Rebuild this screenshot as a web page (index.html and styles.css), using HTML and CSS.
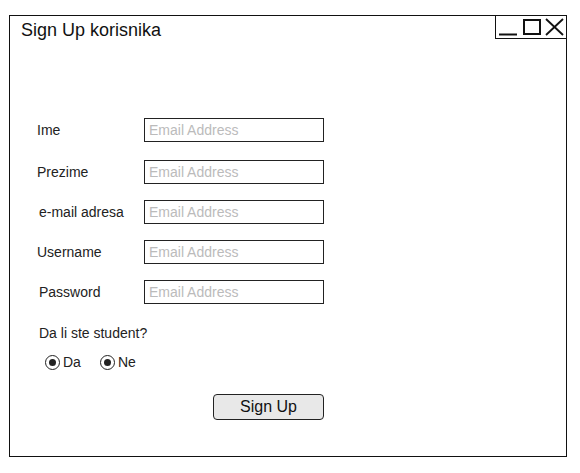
FILE: index.html
```html
<!DOCTYPE html>
<html>
<head>
<meta charset="utf-8">
<link rel="stylesheet" href="styles.css">
</head>
<body>
<div class="window">
  <div class="header">
    <div class="title">Sign Up korisnika</div>
    <div class="controls">
      <svg width="70" height="23" viewBox="0 0 70 23">
        <line x1="4" y1="18.5" x2="22" y2="18.5" stroke="#111" stroke-width="2"/>
        <rect x="29" y="4" width="16" height="14" fill="none" stroke="#111" stroke-width="2"/>
        <line x1="51" y1="3" x2="68" y2="19" stroke="#111" stroke-width="1.8"/>
        <line x1="68" y1="3" x2="51" y2="19" stroke="#111" stroke-width="1.8"/>
      </svg>
    </div>
  </div>
  <div class="form">
    <div class="row first"><span class="label">Ime</span><input class="field" placeholder="Email Address"></div>
    <div class="row"><span class="label">Prezime</span><input class="field" placeholder="Email Address"></div>
    <div class="row"><span class="label shift">e-mail adresa</span><input class="field" placeholder="Email Address"></div>
    <div class="row"><span class="label">Username</span><input class="field" placeholder="Email Address"></div>
    <div class="row"><span class="label shift">Password</span><input class="field" placeholder="Email Address"></div>
    <div class="question">Da li ste student?</div>
    <div class="radios">
      <span class="radio"><span class="dot"></span>Da</span>
      <span class="radio"><span class="dot"></span>Ne</span>
    </div>
    <div class="actions"><button class="btn">Sign Up</button></div>
  </div>
</div>
</body>
</html>
```
FILE: styles.css
```css
* { box-sizing: border-box; }
html, body { margin: 0; padding: 0; background: #fff; }
body {
  font-family: "Liberation Sans", Arial, sans-serif;
  color: #222;
  padding: 15px 0 0 9px;
}
.window {
  width: 558px;
  height: 442px;
  border: 1px solid #111;
}
.header {
  display: flex;
  justify-content: space-between;
  align-items: flex-start;
}
.title {
  font-size: 18px;
  padding: 4px 0 0 11px;
  color: #111;
}
.controls {
  width: 71px;
  height: 23px;
  border-left: 1px solid #111;
  border-bottom: 1px solid #111;
  display: flex;
}
.controls svg { display: block; margin-left: -1px; }
.form {
  padding-left: 27px;
  display: flex;
  flex-direction: column;
}
.row {
  display: flex;
  align-items: center;
  margin-top: 16px;
  height: 24px;
}
.row.first { margin-top: 77px; }
.row:nth-child(2) { margin-top: 18px; }
.label {
  width: 107px;
  font-size: 14px;
  color: #222;
}
.label.shift { padding-left: 2px; }
.field {
  width: 180px;
  height: 24px;
  border: 1px solid #222;
  padding: 0 4px;
  font-family: "Liberation Sans", Arial, sans-serif;
  font-size: 14px;
  outline: none;
}
.field::placeholder { color: #bbb; }
.question {
  font-size: 14px;
  margin: 21px 0 0 2px;
  color: #222;
}
.radios {
  display: flex;
  gap: 19px;
  margin: 13px 0 0 8px;
  font-size: 14px;
}
.radio {
  display: flex;
  align-items: center;
  gap: 3px;
}
.dot {
  width: 15px;
  height: 15px;
  border: 1.5px solid #222;
  border-radius: 50%;
  display: inline-flex;
  align-items: center;
  justify-content: center;
}
.dot::after {
  content: "";
  width: 7px;
  height: 7px;
  border-radius: 50%;
  background: #222;
}
.actions {
  margin-top: 24px;
  padding-left: 176px;
}
.btn {
  width: 111px;
  height: 26px;
  border: 1px solid #222;
  border-radius: 4px;
  background: #e8e8e8;
  font-family: "Liberation Sans", Arial, sans-serif;
  font-size: 16px;
  color: #111;
  padding: 0;
}
```
